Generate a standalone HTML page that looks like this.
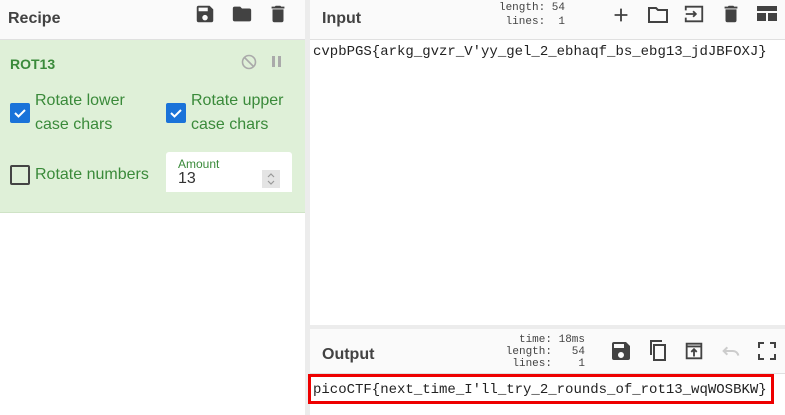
<!DOCTYPE html>
<html><head><style>
*{box-sizing:border-box;margin:0;padding:0}
body{width:785px;height:415px;overflow:hidden;background:#fff;font-family:"Liberation Sans",sans-serif;position:relative}
.abs{position:absolute}
.hdr{background:#fafafa;border-bottom:1px solid #e0e0e0;height:40px}
.title{font-size:16px;font-weight:bold;color:#424242}
.mono{font-family:"Liberation Mono",monospace}
.g{color:#3a8a3a}
.cb{position:absolute;width:20px;height:20px;border-radius:2px}
.on{background:#1a73d9}
.off{border:2px solid #444}
</style></head><body>
<div class="abs hdr" style="left:0;top:0;width:306px"></div>
<div class="abs title" style="left:8px;top:10px">Recipe</div>
<svg class="abs" style="left:194px;top:3px" width="22" height="22" viewBox="0 0 24 24"><path fill="#424242" d="M17 3H5a2 2 0 0 0-2 2v14a2 2 0 0 0 2 2h14a2 2 0 0 0 2-2V7l-4-4zm-5 16a3 3 0 1 1 0-6 3 3 0 0 1 0 6zm3-10H5V5h10v4z"/></svg>
<svg class="abs" style="left:230px;top:3px" width="24" height="22" viewBox="0 0 24 24"><path fill="#424242" d="M10 4H4a2 2 0 0 0-2 2v12a2 2 0 0 0 2 2h16a2 2 0 0 0 2-2V8a2 2 0 0 0-2-2h-8l-2-2z"/></svg>
<svg class="abs" style="left:267px;top:3px" width="22" height="22" viewBox="0 0 24 24"><path fill="#424242" d="M6 19a2 2 0 0 0 2 2h8a2 2 0 0 0 2-2V7H6v12zM19 4h-3.5l-1-1h-5l-1 1H5v2h14V4z"/></svg>
<div class="abs" style="left:0;top:40px;width:306px;height:173px;background:#dff0d8;border-bottom:1px solid #cfe3c6"></div>
<div class="abs g" style="left:10px;top:56px;font-size:14px;font-weight:bold">ROT13</div>
<svg class="abs" style="left:241px;top:54px" width="16" height="16" viewBox="0 0 16 16"><circle cx="8" cy="8" r="6.5" fill="none" stroke="#aaa" stroke-width="1.6"/><path d="M3.5 3.5l9 9" stroke="#aaa" stroke-width="1.6"/></svg>
<div class="abs" style="left:272px;top:56px;width:3px;height:11px;background:#aaa"></div>
<div class="abs" style="left:278px;top:56px;width:3px;height:11px;background:#aaa"></div>
<div class="cb on" style="left:10px;top:103px"></div>
<svg class="abs" style="left:10px;top:103px" width="20" height="20" viewBox="0 0 20 20"><path d="M5 10l3.5 3.5L15 7" fill="none" stroke="#fff" stroke-width="2"/></svg>
<div class="abs g" style="left:35px;top:89px;font-size:16px;line-height:24px">Rotate lower<br>case chars</div>
<div class="cb on" style="left:166px;top:103px"></div>
<svg class="abs" style="left:166px;top:103px" width="20" height="20" viewBox="0 0 20 20"><path d="M5 10l3.5 3.5L15 7" fill="none" stroke="#fff" stroke-width="2"/></svg>
<div class="abs g" style="left:191px;top:89px;font-size:16px;line-height:24px">Rotate upper<br>case chars</div>
<div class="cb off" style="left:10px;top:165px"></div>
<div class="abs g" style="left:35px;top:166px;font-size:16px">Rotate numbers</div>
<div class="abs" style="left:166px;top:152px;width:126px;height:40px;background:#fff;border-radius:3px 3px 0 0"></div>
<div class="abs g" style="left:178px;top:157px;font-size:12px">Amount</div>
<div class="abs" style="left:178px;top:170px;font-size:16px;color:#333">13</div>
<div class="abs" style="left:262px;top:170px;width:18px;height:18px;background:#e4e4e4"></div>
<svg class="abs" style="left:262px;top:170px" width="18" height="18" viewBox="0 0 18 18"><path d="M6 7l3-3 3 3M6 11l3 3 3-3" fill="none" stroke="#999" stroke-width="1.2"/></svg>
<div class="abs" style="left:305px;top:0;width:5px;height:415px;background:#ececec"></div>
<div class="abs hdr" style="left:310px;top:0;width:475px"></div>
<div class="abs title" style="left:322px;top:10px">Input</div>
<div class="abs mono" style="left:480px;top:1px;width:85px;text-align:right;font-size:11px;line-height:14px;color:#444;white-space:pre">length: 54
lines:  1</div>
<svg class="abs" style="left:610px;top:4px" width="22" height="22" viewBox="0 0 24 24"><path d="M12 5v14M5 12h14" stroke="#424242" stroke-width="2"/></svg>
<svg class="abs" style="left:646px;top:3px" width="24" height="24" viewBox="0 0 24 24"><path d="M3 5h7l2 2h9v12H3z" fill="none" stroke="#424242" stroke-width="2"/></svg>
<svg class="abs" style="left:682px;top:3px" width="24" height="22" viewBox="0 0 24 24"><path d="M3 8V4h18v16H3v-4M3 12h11M11 9l3 3-3 3" fill="none" stroke="#424242" stroke-width="2"/></svg>
<svg class="abs" style="left:720px;top:3px" width="22" height="22" viewBox="0 0 24 24"><path fill="#424242" d="M6 19a2 2 0 0 0 2 2h8a2 2 0 0 0 2-2V7H6v12zM19 4h-3.5l-1-1h-5l-1 1H5v2h14V4z"/></svg>
<svg class="abs" style="left:756px;top:5px" width="22" height="18" viewBox="0 0 22 18"><rect x="1" y="1" width="20" height="5" fill="#424242"/><rect x="1" y="8" width="9" height="8" fill="#424242"/><rect x="12" y="8" width="9" height="8" fill="#424242"/></svg>
<div class="abs mono" style="left:313px;top:44px;font-size:14px;color:#222">cvpbPGS{arkg_gvzr_V'yy_gel_2_ebhaqf_bs_ebg13_jdJBFOXJ}</div>
<div class="abs" style="left:310px;top:325px;width:475px;height:4px;background:#ececec"></div>
<div class="abs hdr" style="left:310px;top:329px;width:475px;height:45px"></div>
<div class="abs title" style="left:322px;top:346px">Output</div>
<div class="abs mono" style="left:480px;top:334px;width:105px;text-align:right;font-size:11px;line-height:12px;color:#444;white-space:pre">time: 18ms
length:   54
lines:    1</div>
<svg class="abs" style="left:609px;top:339px" width="24" height="24" viewBox="0 0 24 24"><path fill="#424242" d="M17 3H5a2 2 0 0 0-2 2v14a2 2 0 0 0 2 2h14a2 2 0 0 0 2-2V7l-4-4zm-5 16a3 3 0 1 1 0-6 3 3 0 0 1 0 6zm3-10H5V5h10v4z"/></svg>
<svg class="abs" style="left:646px;top:339px" width="24" height="24" viewBox="0 0 24 24"><path d="M16 2H5v14M8 6h11v15H8z" fill="none" stroke="#424242" stroke-width="2"/></svg>
<svg class="abs" style="left:683px;top:340px" width="22" height="22" viewBox="0 0 24 24"><path d="M4 4h16v16H4zM4 7h16M12 18v-8M9 13l3-3 3 3" fill="none" stroke="#424242" stroke-width="2"/></svg>
<svg class="abs" style="left:719px;top:340px" width="24" height="22" viewBox="0 0 24 24"><path d="M8 8L4 12l4 4M4 12h10a6 6 0 0 1 6 5" fill="none" stroke="#ccc" stroke-width="2.2"/></svg>
<svg class="abs" style="left:757px;top:341px" width="20" height="20" viewBox="0 0 20 20"><path d="M2 7V2h5M13 2h5v5M18 13v5h-5M7 18H2v-5" fill="none" stroke="#424242" stroke-width="2"/></svg>
<div class="abs" style="left:308px;top:374px;width:466px;height:30px;border:3px solid #e00"></div>
<div class="abs mono" style="left:313px;top:382px;font-size:14px;color:#222">picoCTF{next_time_I'll_try_2_rounds_of_rot13_wqWOSBKW}</div>
</body></html>
